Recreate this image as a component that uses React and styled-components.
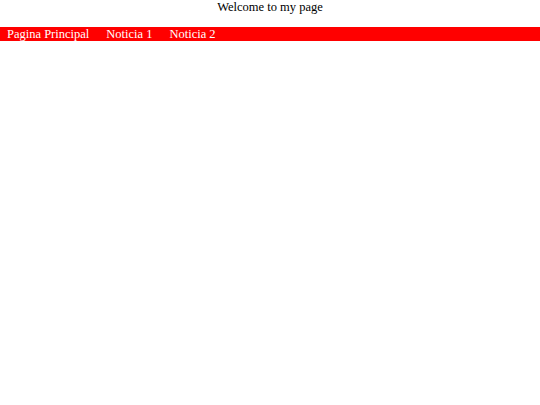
import React from 'react';
import styled, { createGlobalStyle } from 'styled-components';

const GlobalStyle = createGlobalStyle`
  html, body {
    margin: 0;
    padding: 0;
    background: #ffffff;
    font-family: "Liberation Serif", "Times New Roman", serif;
  }
`;

const App = () => {
  return (
    <S.Wrap>
      <GlobalStyle />
      <S.Title>Welcome to my page</S.Title>
      <S.Nav>
        <S.NavLink href="#none">Pagina Principal</S.NavLink>
        <S.NavLink href="#none">Noticia 1</S.NavLink>
        <S.NavLink href="#none">Noticia 2</S.NavLink>
      </S.Nav>
    </S.Wrap>
  );
};

const S = {
  Wrap: styled.div`
    width: 100%;
  `,
  Title: styled.div`
    text-align: center;
    font-size: 12.5px;
    line-height: 15px;
    color: #000;
    margin-bottom: 12px;
  `,
  Nav: styled.nav`
    display: flex;
    align-items: center;
    gap: 3px;
    height: 14px;
    background: #ff0000;
  `,
  NavLink: styled.a`
    color: #ffffff;
    text-decoration: none;
    font-size: 12.5px;
    line-height: 14px;
    padding: 0 7px;
  `
};

export default App;
